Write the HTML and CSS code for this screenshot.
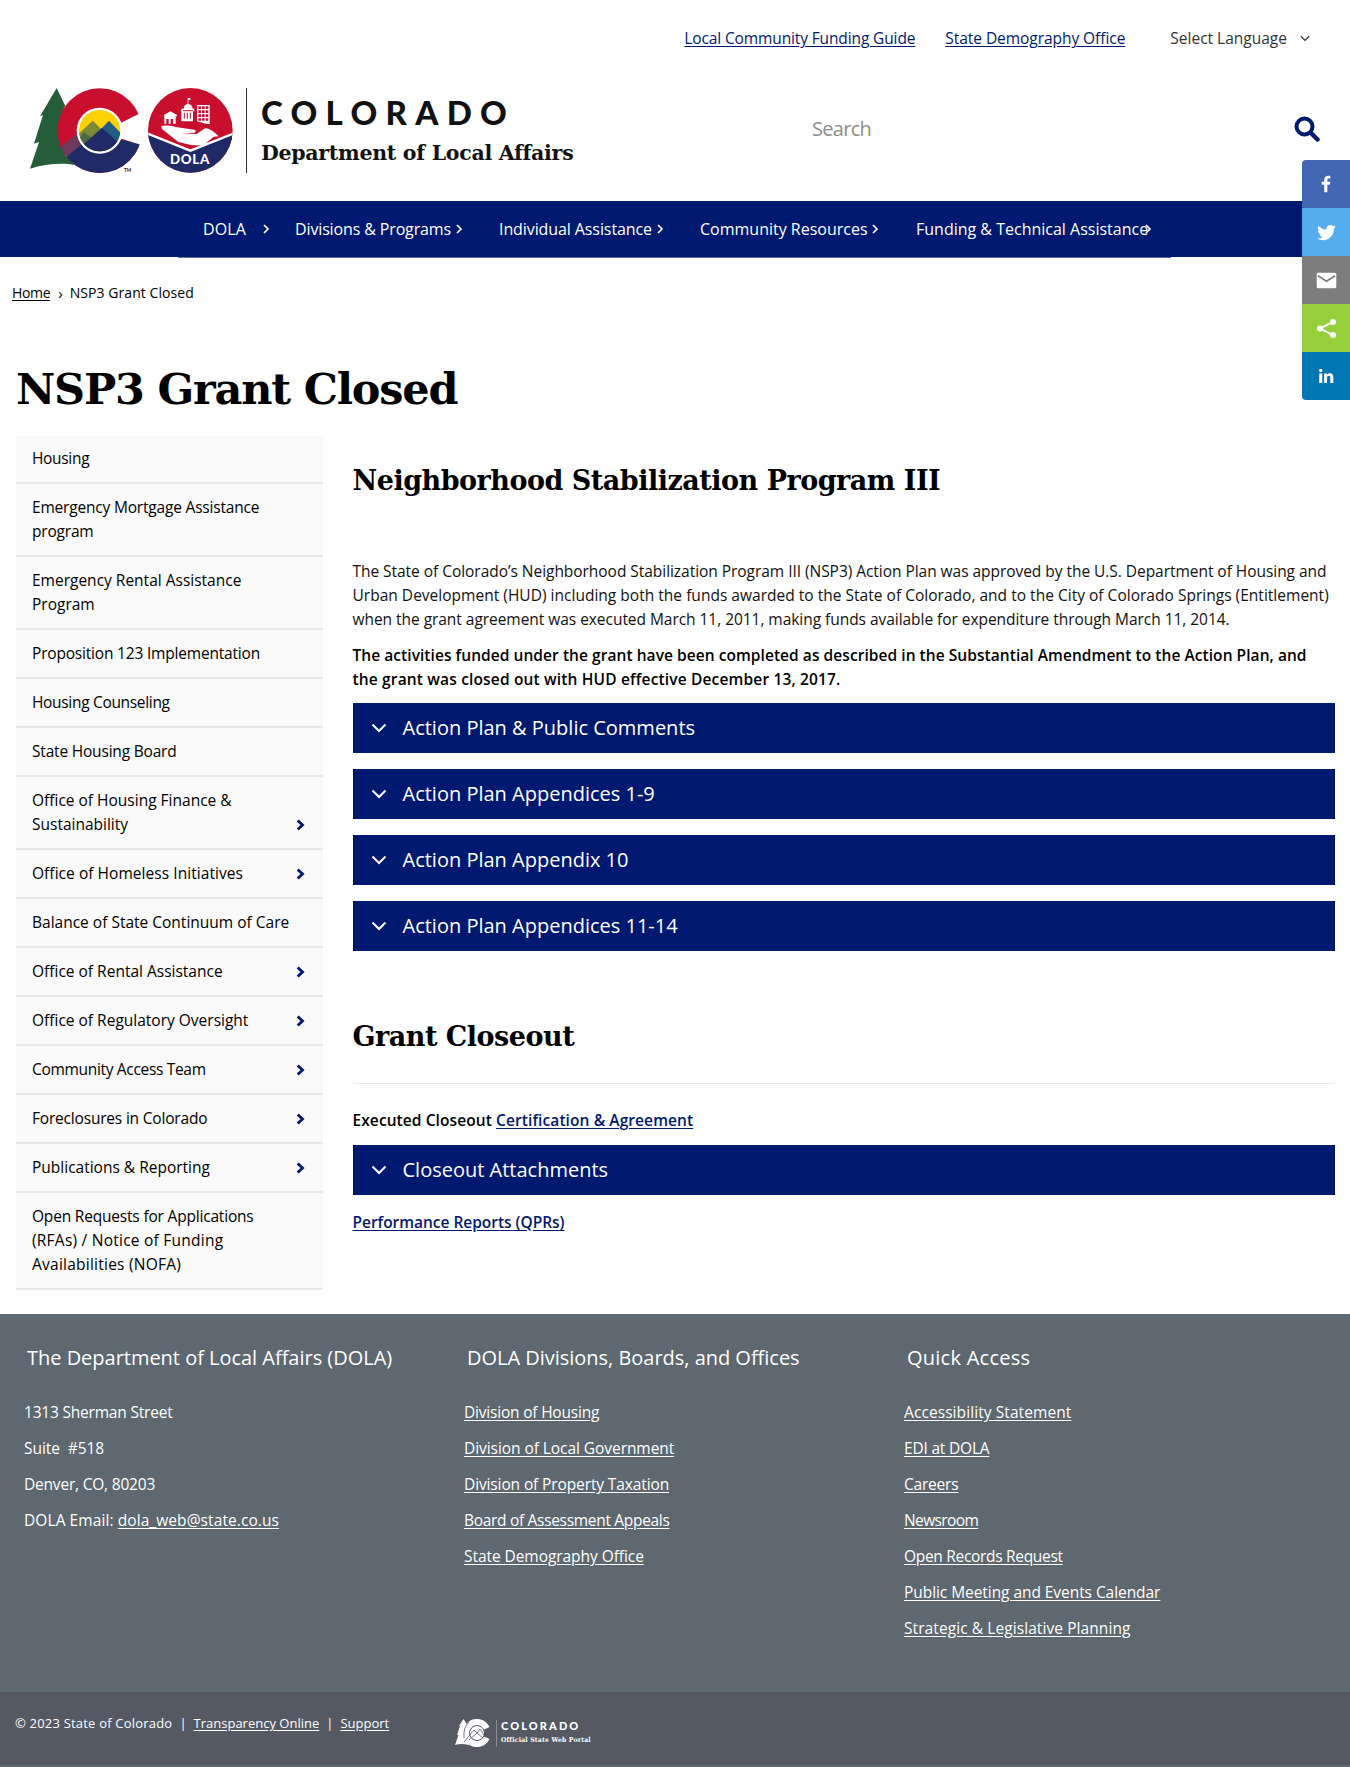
FILE: index.html
```html
<!DOCTYPE html>
<html lang="en">
<head>
<meta charset="utf-8">
<title>NSP3 Grant Closed | Department of Local Affairs</title>
<link rel="stylesheet" href="styles.css">
</head>
<body>
<svg class="defs" aria-hidden="true">
  <symbol id="right" viewBox="0 0 8 10"><path d="M2 1l4 4-4 4" fill="none" stroke="currentColor" stroke-width="1.700"/></symbol>
  <symbol id="right-bold" viewBox="0 0 8 10"><path d="M1.500 1l4.300 4-4.300 4" fill="none" stroke="currentColor" stroke-width="2.500"/></symbol>
  <symbol id="down" viewBox="0 0 16 10"><path d="M1.500 1.500L8 8l6.500-6.500" fill="none" stroke="currentColor" stroke-width="2"/></symbol>
</svg>
<header class="header">
  <div class="utility">
    <a class="util-link guide" href="#">Local Community Funding Guide</a>
    <a class="util-link demography" href="#">State Demography Office</a>
    <span class="language">Select Language <svg class="lang-arrow"><use href="#down"/></svg></span>
  </div>
  <div class="brand">
    <svg class="logo" viewBox="0 0 660 300" role="img" aria-label="Colorado DOLA">
      <path fill="#245d38" d="M95 24L121 78L116 83L123 105L120 225L150 255C110 247 60 252 15 266L42 186L27 191L54 105L45 109Z"/>
      <clipPath id="cclip"><circle cx="224" cy="152" r="127"/></clipPath>
      <clipPath id="cin"><circle cx="224" cy="152" r="62"/></clipPath>
      <g clip-path="url(#cclip)">
        <path fill="#c8102e" d="M90 15h262v270H90z"/>
        <path fill="#6d3a5d" d="M101 206L205 120L260 170L130 240Z"/>
        <path fill="#202a67" d="M122 233L232 140L290 180L360 192V290H110Z"/>
      </g>
      <circle cx="224" cy="152" r="69" fill="#fff"/>
      <path fill="#fff" d="M282 131L352 97V196L282 174Z"/>
      <g clip-path="url(#cin)">
        <path fill="#ffd100" d="M150 80h150v140H150z"/>
        <path fill="#7a8a35" d="M150 172L203 122L240 158V220H150Z"/>
        <path fill="#235d84" d="M205 170L252 122L300 172V220H205Z"/>
        <path fill="#4d6846" d="M152 192L176 157L205 176L184 205Z"/>
        <path fill="#202a67" d="M150 215L231 144L300 205V220H150Z"/>
      </g>
      <text x="297" y="275" class="tm">TM</text>
      <clipPath id="dclip"><circle cx="496" cy="151" r="127"/></clipPath>
      <g clip-path="url(#dclip)">
        <path fill="#c8102e" d="M368 20h256v260H368z"/>
        <path fill="#202a67" stroke="#fff" stroke-width="7" d="M360 158L496 212L632 158V300H360Z"/>
      </g>
      <g fill="#fff">
        <path d="M409 138Q430 134 452 141L508 149Q517 153 508 158L472 160L515 162L540 145Q555 143 581 169L566 170L535 196Q498 198 460 186L411 147Z"/>
        <path d="M417 105l19-11 20 11v4h-4v22h-8v-14h-7v14h-6v-14h-7v14h-6v-22h-1zM470 86h6q1-12 12-14v-18h8v6h-6v12q12 2 13 14h5v8h-4v30h-35v-30h-2z"/>
        <path fill-rule="evenodd" d="M516 75h38v57h-8l-30-8zM520 79v8h8v-8zm11 0v8h8v-8zm11 0v8h8v-8zM520 91v8h8v-8zm11 0v8h8v-8zm11 0v8h8v-8zM520 103v8h8v-8zm11 0v8h8v-8zm11 0v8h8v-8zM520 115v7h8v-7zm11 0v7h8v-7zm11 0v7h8v-7z"/>
      </g>
      <path stroke="#c8102e" stroke-width="3" fill="none" d="M478 98v18M487 98v18M496 98v18M474 92h30"/>
      <text x="435" y="251" class="dola">DOLA</text>
    </svg>
    <div class="wordmark">
      <div class="state">COLORADO</div>
      <div class="dept">Department of Local Affairs</div>
    </div>
    <div class="search">
      <span>Search</span>
      <svg class="search-icon" viewBox="0 0 26 26"><circle cx="10.500" cy="10.500" r="8" fill="none" stroke="#001970" stroke-width="4"/><path d="M16.500 16.500l7 7" stroke="#001970" stroke-width="4.500" stroke-linecap="round"/></svg>
    </div>
  </div>
</header>
<nav class="nav">
  <a class="n1" href="#">DOLA<svg class="caret"><use href="#right"/></svg></a>
  <a class="n2" href="#">Divisions &amp; Programs<svg class="caret"><use href="#right"/></svg></a>
  <a class="n3" href="#">Individual Assistance<svg class="caret"><use href="#right"/></svg></a>
  <a class="n4" href="#">Community Resources<svg class="caret"><use href="#right"/></svg></a>
  <a class="n5" href="#">Funding &amp; Technical Assistance<svg class="caret"><use href="#right"/></svg></a>
</nav>
<div class="nav-edge"></div>
<div class="crumbs"><a class="home" href="#">Home</a><span class="sep">›</span><span class="here">NSP3 Grant Closed</span></div>
<h1 class="title">NSP3 Grant Closed</h1>
<div class="page">
  <ul class="side">
    <li class="first tight">Housing</li>
    <li class="snug">Emergency Mortgage Assistance<br>program</li>
    <li>Emergency Rental Assistance<br>Program</li>
    <li class="snug">Proposition 123 Implementation</li>
    <li class="tight">Housing Counseling</li>
    <li class="snug">State Housing Board</li>
    <li>Office of Housing Finance &amp;<br>Sustainability<svg class="more"><use href="#right-bold"/></svg></li>
    <li class="loose">Office of Homeless Initiatives<svg class="more"><use href="#right-bold"/></svg></li>
    <li>Balance of State Continuum of Care<svg class="defs"></svg></li>
    <li>Office of Rental Assistance<svg class="more"><use href="#right-bold"/></svg></li>
    <li>Office of Regulatory Oversight<svg class="more"><use href="#right-bold"/></svg></li>
    <li class="tight">Community Access Team<svg class="more"><use href="#right-bold"/></svg></li>
    <li class="snug">Foreclosures in Colorado<svg class="more"><use href="#right-bold"/></svg></li>
    <li>Publications &amp; Reporting<svg class="more"><use href="#right-bold"/></svg></li>
    <li><span class="snug">Open Requests for Applications</span><br><span class="wide">(RFAs) / Notice of Funding<br>Availabilities (NOFA)</span></li>
  </ul>
  <main class="main">
    <h2>Neighborhood Stabilization Program III</h2>
    <p class="intro"><span class="l1">The State of Colorado’s Neighborhood Stabilization Program III (NSP3) Action Plan was approved by the U.S. Department of Housing and</span><br><span class="l2">Urban Development (HUD) including both the funds awarded to the State of Colorado, and to the City of Colorado Springs (Entitlement)</span><br><span class="l1">when the grant agreement was executed March 11, 2011, making funds available for expenditure through March 11, 2014.</span></p>
    <p class="strong"><span class="l3">The activities funded under the grant have been completed as described in the Substantial Amendment to the Action Plan, and</span><br><span class="l4">the grant was closed out with HUD effective December 13, 2017.</span></p>
    <div class="accordions">
      <div class="acc"><svg class="chev"><use href="#down"/></svg>Action Plan &amp; Public Comments</div>
      <div class="acc"><svg class="chev"><use href="#down"/></svg>Action Plan Appendices 1-9</div>
      <div class="acc"><svg class="chev"><use href="#down"/></svg>Action Plan Appendix 10</div>
      <div class="acc"><svg class="chev"><use href="#down"/></svg>Action Plan Appendices 11-14</div>
    </div>
    <h2 class="closeout">Grant Closeout</h2>
    <hr class="rule">
    <p class="strong executed">Executed Closeout <a href="#">Certification &amp; Agreement</a></p>
    <div class="acc"><svg class="chev"><use href="#down"/></svg>Closeout Attachments</div>
    <p class="strong reports"><a href="#">Performance Reports (QPRs)</a></p>
  </main>
</div>
<footer class="footer">
  <section><h3>The Department of Local Affairs (DOLA)</h3>
    <p class="t1">1313 Sherman Street</p><p>Suite &nbsp;#518</p><p class="t1">Denver, CO, 80203</p><p class="t3">DOLA Email: <a href="#">dola_web@state.co.us</a></p></section>
  <section><h3>DOLA Divisions, Boards, and Offices</h3>
    <p class="t1"><a href="#">Division of Housing</a></p><p><a href="#">Division of Local Government</a></p><p class="t2"><a href="#">Division of Property Taxation</a></p><p class="t4"><a href="#">Board of Assessment Appeals</a></p><p><a href="#">State Demography Office</a></p></section>
  <section><h3 class="quick">Quick Access</h3>
    <p class="t3"><a href="#">Accessibility Statement</a></p><p class="t1"><a href="#">EDI at DOLA</a></p><p class="t1"><a href="#">Careers</a></p><p class="t5"><a href="#">Newsroom</a></p><p class="t4"><a href="#">Open Records Request</a></p><p><a href="#">Public Meeting and Events Calendar</a></p><p class="t3"><a href="#">Strategic &amp; Legislative Planning</a></p></section>
</footer>
<div class="legal">
  <div class="legal-links"><span class="copy">© 2023 State of Colorado</span><span class="bar">|</span><a href="#">Transparency Online</a><span class="bar">|</span><a href="#">Support</a></div>
  <svg class="portal" viewBox="0 0 138 30" role="img" aria-label="Colorado Official State Web Portal">
    <path fill="#fff" d="M8.500 1L14 10V27Q6 25 0 27L3.500 17H2L5 8H4Z"/>
    <path fill="#fff" d="M34.500 9A14 14 0 1 0 34.500 21L29 18.500V11.500Z"/>
    <circle cx="22" cy="15" r="7.500" fill="none" stroke="#545964"/><path d="M9 24L19 12L22 15L25 11L29 17M14 22L22 15L28 20M14 4Q8 9 9 20" fill="none" stroke="#545964" stroke-width=".8"/>
    <path d="M41.500 2v27" stroke="#8c9098"/>
    <text x="46" y="12" class="p1">COLORADO</text><text x="46" y="24" class="p2">Official State Web Portal</text>
  </svg>
</div>
<div class="share">
  <a class="fb" href="#"><svg viewBox="0 0 32 32"><path fill="#fff" d="M17.800 27V17h3.400l.5-3.900h-3.900v-2.500c0-1.100.3-1.900 1.900-1.900h2.100V5.200c-.4 0-1.600-.1-3-.1-3 0-5.100 1.800-5.100 5.200v2.800h-3.400V17h3.400v10z"/></svg></a>
  <a class="tw" href="#"><svg viewBox="0 0 32 32"><path fill="#fff" d="M28 8.600a9.900 9.900 0 0 1-2.800.8 5 5 0 0 0 2.200-2.700c-1 .5-2 1-3.100 1.200a4.900 4.900 0 0 0-8.500 3.300c0 .4 0 .8.100 1.100-4-.2-7.700-2.100-10.100-5.100a4.900 4.900 0 0 0 1.500 6.600c-.8 0-1.500-.3-2.200-.6v.1c0 2.400 1.700 4.400 3.900 4.800a5 5 0 0 1-2.200.1c.6 2 2.400 3.400 4.600 3.400A9.900 9.900 0 0 1 4 23.600a13.900 13.900 0 0 0 7.500 2.200c9.100 0 14-7.500 14-14v-.6c1-.7 1.800-1.600 2.500-2.600z"/></svg></a>
  <a class="mail" href="#"><svg viewBox="0 0 32 32"><rect x="3.500" y="6" width="25" height="20" rx="2" fill="#fff"/><path d="M5 10l11 7 11-7" fill="none" stroke="#7d7d7d" stroke-width="2.200"/></svg></a>
  <a class="sh" href="#"><svg viewBox="0 0 32 32"><path d="M24.500 7.500L7.500 16l17 8.500" fill="none" stroke="#fff" stroke-width="2.500"/><g fill="#fff"><circle cx="24.300" cy="7.600" r="3.900"/><circle cx="7.700" cy="16" r="3.900"/><circle cx="24.300" cy="24.400" r="3.900"/></g></svg></a>
  <a class="li" href="#"><svg viewBox="0 0 32 32"><path fill="#fff" d="M7 12.600h4v12.600H7zM9 6.300a2.300 2.300 0 1 1 0 4.600 2.300 2.300 0 0 1 0-4.600M13.400 12.600h3.800v1.700h.1c.5-1 1.800-2 3.700-2 4 0 4.800 2.600 4.800 6v6.900h-4V19c0-1.500 0-3.300-2-3.300-2.100 0-2.400 1.600-2.400 3.200v6.300h-4z"/></svg></a>
</div>
</body>
</html>
```
FILE: styles.css
```css
* { box-sizing: border-box; }
body { margin: 0; background: #fff; color: #111; font: 15.5px/24px "Open Sans", sans-serif; }
h1, h2, h3, p, ul { margin: 0; padding: 0; }
a { color: inherit; text-underline-offset: 2px; }
.defs { display: none; }

.header { height: 201px; }
.utility { display: flex; justify-content: flex-end; padding: 26px 40px 0 0; color: #333; }
.util-link { color: #001970; }
.guide { letter-spacing: -.126px; margin-right: 30px; }
.demography { letter-spacing: -.052px; margin-right: 45px; }
.language { display: flex; align-items: center; gap: 13px; }
.lang-arrow { width: 10px; height: 7px; }
.brand { display: flex; padding: 30px 0 0 25px; }
.logo { width: 220px; height: 100px; }
.tm { font: 700 14px Lato, sans-serif; fill: #222; }
.dola { font: 900 40px Lato, sans-serif; fill: #fff; letter-spacing: 2px; }
.wordmark { margin: 8px 0 0 1px; border-left: 1px solid #333; height: 85px; padding-left: 14px; width: 400px; white-space: nowrap; }
.state { font: 900 33px/48px Lato, sans-serif; letter-spacing: 8.300px; }
.dept { font: 700 20.500px/34px "DejaVu Serif", serif; letter-spacing: -.28px; }
.search { flex: 1; display: flex; justify-content: space-between; align-items: center; height: 30px; margin: 34px 30px 0 166px; color: #8d8d8d; font-size: 20px; letter-spacing: -.7px; }
.search-icon { width: 26px; height: 26px; }

.nav { display: flex; height: 56px; align-items: center; background: #001970; color: #fff; padding-left: 203px; font-size: 16px; white-space: nowrap; }
.nav a { display: flex; align-items: center; text-decoration: none; }
.nav-edge { height: 1px; margin: 0 179px 0 178px; background: #5b6ca6; }
.caret { width: 8px; height: 10px; margin-left: 4px; }
.n1 { width: 92px; letter-spacing: .117px; }
.n1 .caret { margin-left: 16px; }
.n2 { width: 204px; letter-spacing: -.136px; }
.n3 { width: 201px; letter-spacing: -.092px; }
.n3 .caret { margin-left: 4px; }
.n4 { width: 216px; }
.nav .n4 .caret { margin-left: 3px; }
.n5 .caret { margin-left: -4px; }

.crumbs { display: flex; padding: 23px 0 0 12px; font-size: 14px; color: #000; }
.home { letter-spacing: -.35px; }
.sep { margin: 0 7px 0 8px; font-size: 15px; }
.here { letter-spacing: .06px; }
.title { margin: 54px 0 0 16px; height: 77px; font: 700 43px/60px "DejaVu Serif", serif; letter-spacing: -1.2px; color: #000; }
.page { display: flex; gap: 29.500px; padding: 0 15px 24px 16px; height: 878px; }
.side { width: 307px; list-style: none; background: #fafafa; height: 853px; flex: none; }
.side li { padding: 12px 16px; border-bottom: 2px solid #e8e8e8; margin-bottom: -1px; color: #000; position: relative; }
.side .first { padding: 10px 16px 12px; }
.snug { letter-spacing: -.19px; }
.tight { letter-spacing: -.32px; }
.loose { letter-spacing: .05px; }
.wide { letter-spacing: .24px; }
.more { position: absolute; right: 18px; bottom: 17px; width: 9px; height: 12px; color: #001970; }
.main { flex: 1; color: #111; }
h2 { font: 700 27px/40px "DejaVu Serif", serif; letter-spacing: -.49px; color: #000; padding-top: 25px; }
.intro { margin-top: 58px; white-space: nowrap; }
.l1 { letter-spacing: -.042px; }
.l2 { letter-spacing: .018px; }
.strong { font-weight: 600; white-space: nowrap; color: #000; letter-spacing: .09px; }
.intro + .strong { margin-top: 12px; }
.l3 { letter-spacing: .057px; }
.l4 { letter-spacing: .159px; }
.strong a { color: #001970; }
.accordions { display: flex; flex-direction: column; gap: 16px; margin-top: 12px; }
.acc { height: 50px; background: #001970; color: #fff; display: flex; align-items: center; padding-left: 18px; font-size: 20px; }
.chev { width: 16px; height: 10px; margin-right: 16px; }
.closeout { padding-top: 66px; }
.rule { border: 0; border-top: 1px solid #e8e8e8; margin: 26px 0 0; }
.executed { margin: 24px 0 13px; }
.reports { margin-top: 15px; letter-spacing: -.02px; }

.footer { background: #5d6870; color: #fff; height: 378px; padding: 30px 0 0 24px; display: grid; grid-template-columns: 440px 440px 1fr; }
h3 { font-size: 20px; line-height: 28px; font-weight: 400; letter-spacing: -.02px; padding-left: 3px; margin-bottom: 28px; }
.quick { letter-spacing: .25px; }
.footer p { margin-bottom: 12px; letter-spacing: -.06px; }
.footer .t1 { letter-spacing: -.2px; }
.footer .t2 { letter-spacing: -.12px; }
.footer .t3 { letter-spacing: .08px; }
.footer .t4 { letter-spacing: -.31px; }
.footer .t5 { letter-spacing: -.6px; }
.legal { background: #545964; border-bottom: 2px solid #5d6870; height: 75px; display: flex; padding: 19px 0 0 15px; color: #fff; font-size: 13px; }
.legal-links { display: flex; width: 440px; }
.copy { letter-spacing: .2px; }
.bar { margin: 0 7px; }
.portal { width: 138px; height: 30px; margin-top: 7px; }
.p1 { font: 900 11px Lato, sans-serif; fill: #fff; letter-spacing: 2.100px; }
.p2 { font: 700 6.800px "DejaVu Serif Condensed", "DejaVu Serif", serif; fill: #fff; letter-spacing: .2px; }

/* Floating share rail over the page's right edge */
.share { position: absolute; right: 0; top: 160px; width: 48px; border-radius: 4px 0 0 4px; overflow: hidden; }
.share a { display: flex; height: 48px; align-items: center; justify-content: center; }
.share svg { width: 25px; height: 25px; }
.share .fb svg, .share .li svg { width: 24px; height: 24px; }
.fb { background: #4267b2; }
.tw { background: #55acee; }
.mail { background: #7d7d7d; }
.sh { background: #95d03a; }
.li { background: #0077b5; }
```
